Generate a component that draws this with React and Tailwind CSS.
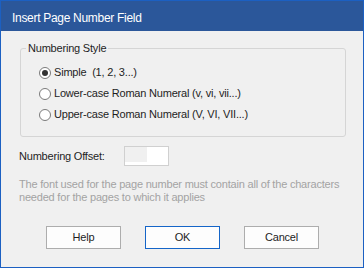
import React, { useState } from 'react';

const options = [
  { id: 'simple', label: 'Simple  (1, 2, 3...)' },
  { id: 'lower', label: 'Lower-case Roman Numeral (v, vi, vii...)' },
  { id: 'upper', label: 'Upper-case Roman Numeral (V, VI, VII...)' },
];

const Radio = ({ checked }) => (
  <span className="w-[12px] h-[12px] rounded-full border border-[#7a7a7a] bg-white flex items-center justify-center shrink-0">
    {checked && <span className="w-[6px] h-[6px] rounded-full bg-[#333333]" />}
  </span>
);

export default function App() {
  const [style, setStyle] = useState('simple');

  return (
    <div className="w-[364px] h-[268px] flex flex-col bg-[#f0f0f0] border border-[#1c60c2] font-['Liberation_Sans',Arial,sans-serif] text-[#1e1e1e] text-[11px] tracking-[-0.2px] overflow-hidden">
      <div className="h-[30px] shrink-0 bg-[#2b579a] flex items-center pl-[11px] pt-[3px] text-white text-[12px] tracking-[-0.3px]">
        Insert Page Number Field
      </div>

      <div className="flex flex-col pl-[18px]">
        <fieldset className="mt-[10px] ml-[1px] w-[326px] h-[96px] border border-[#d5d5d5] rounded-[3px] p-0">
          <legend className="ml-[5px] px-[2px] leading-[14px]">Numbering Style</legend>
          <div className="flex flex-col mt-[7px] pl-[18px]">
            {options.map((o) => (
              <label
                key={o.id}
                onClick={() => setStyle(o.id)}
                className="h-[21px] flex items-center gap-[3px] cursor-default"
              >
                <Radio checked={style === o.id} />
                <span className="whitespace-pre">{o.label}</span>
              </label>
            ))}
          </div>
        </fieldset>

        <div className="flex items-center mt-[9px]">
          <span className="w-[105px]">Numbering Offset:</span>
          <div className="w-[45px] h-[20px] bg-white border border-[#d0d0d0]">
            <div className="w-[22px] h-[15px] bg-[#f0f0f0]" />
          </div>
        </div>

        <p className="mt-[12px] leading-[13px] text-[#a3a3a3] pr-[20px]">
          The font used for the page number must contain all of the characters needed for the pages to which it applies
        </p>

        <div className="flex gap-[24px] mt-[22px] ml-[27px]">
          <button className="w-[75px] h-[23px] bg-[#fdfdfd] border border-[#adadad]">Help</button>
          <button className="w-[75px] h-[23px] bg-[#fdfdfd] border border-[#1565c8]">OK</button>
          <button className="w-[75px] h-[23px] bg-[#fdfdfd] border border-[#adadad]">Cancel</button>
        </div>
      </div>
    </div>
  );
}
